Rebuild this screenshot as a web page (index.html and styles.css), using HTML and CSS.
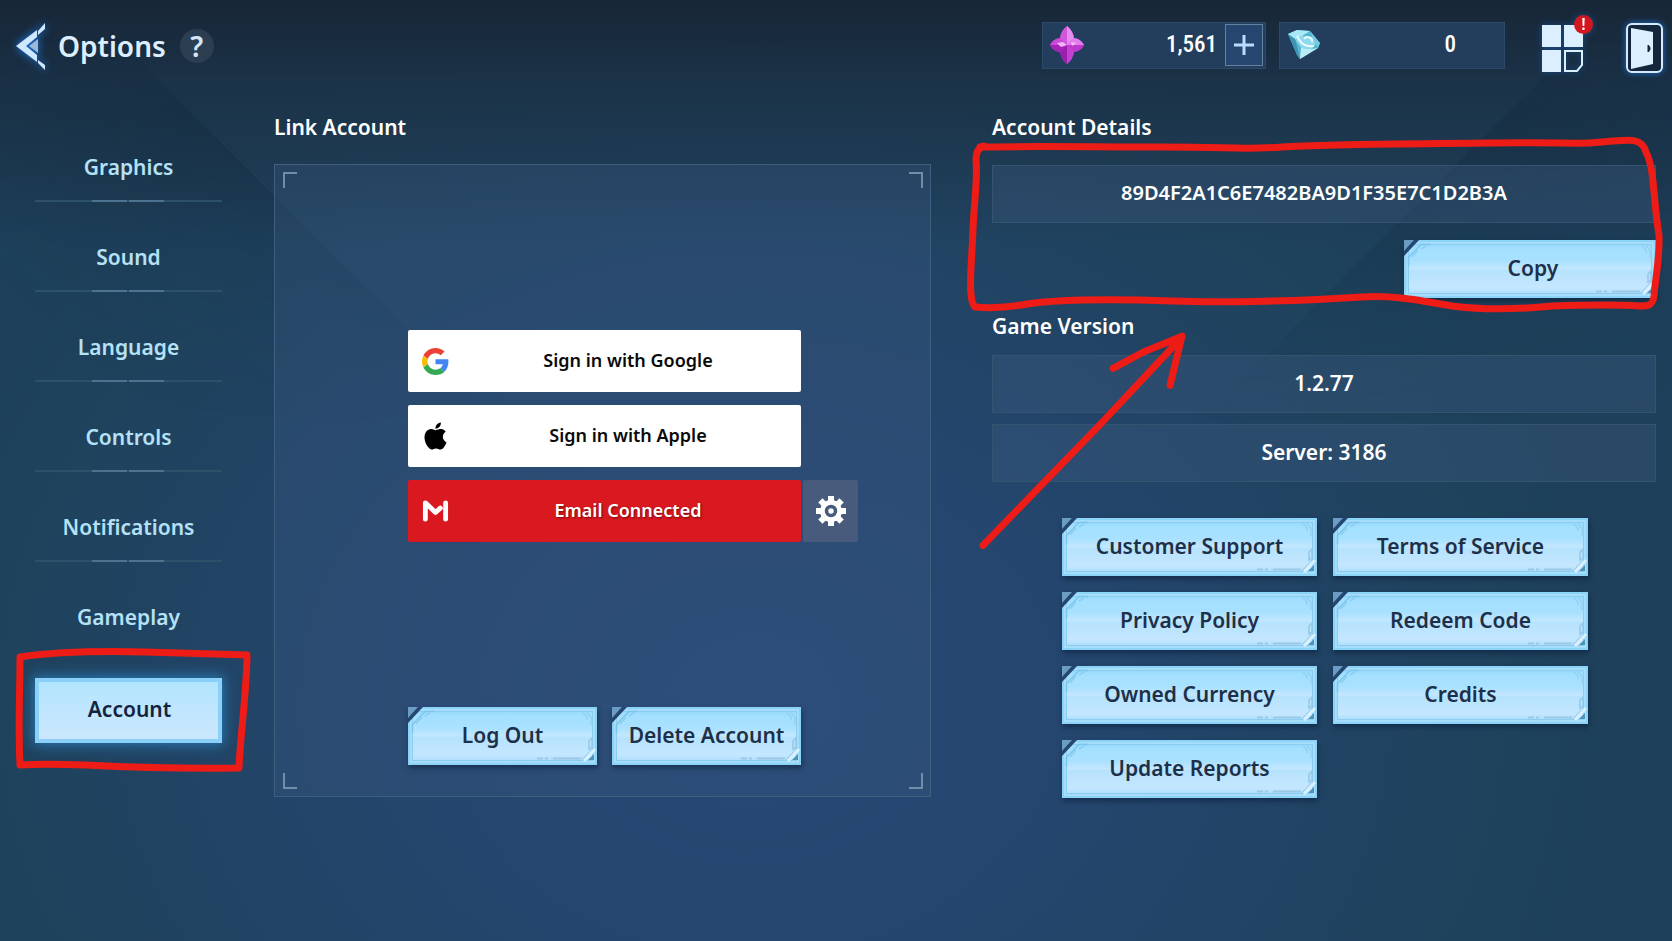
FILE: index.html
```
<!DOCTYPE html>
<html lang="en">
<head>
    <meta charset="UTF-8">
    <meta name="viewport" content="width=device-width, initial-scale=1">
    <title>Options</title>
    <link rel="stylesheet" href="styles.css">
</head>
<body>
<!-- shared button ornaments -->
<svg class="defs" aria-hidden="true">
    <symbol id="deco-tl" viewBox="0 0 26 26">
        <path d="M0 0H15L0 16Z" fill="#24466f"/>
        <path d="M0 0H10L0 11Z" fill="#6a9cc4"/>
        <path d="M26 4.5H17L4.500 17.500V26" fill="none" stroke="#7cc6ee" stroke-width="1.500"/>
        <path d="M22 6L17 9M14 10L8 17" fill="none" stroke="#8ecdf0" stroke-width="1.500"/>
    </symbol>
    <symbol id="deco-tr" viewBox="0 0 12 16">
        <path d="M2 1L6 5V8M6 1L10 5V13" fill="none" stroke="#8fd0f2" stroke-width="1.300"/>
    </symbol>
    <symbol id="deco-br" viewBox="0 0 62 30">
        <path d="M2 24.500H8M10 24.500H13M18 24.500H46" stroke="#9cc8e6" stroke-width="2"/>
        <path d="M60 15L49 27" fill="none" stroke="#d9f1ff" stroke-width="3"/>
        <path d="M54 15V7L57 4V13Z" fill="none" stroke="#93c8e8" stroke-width="1.500"/>
        <path d="M59 20V26H53Z" fill="#4f93bd"/>
        <path d="M58 14L47 26" stroke="#8cc4e6" stroke-width="1"/>
    </symbol>
</svg>

<header class="topbar">
    <button class="back" aria-label="Back">
        <svg viewBox="0 0 30 48" width="30" height="48">
            <path d="M29 1V7L22 13L22 9ZM21 8V15L10 24L21 33L21 40L0 24ZM22 38L29 43V48L22 41Z" fill="#cfe8ff"/>
            <path d="M22 17V31L13 24Z" fill="#9db8d6"/>
        </svg>
    </button>
    <h1>Options</h1>
    <button class="help" aria-label="Help">?</button>

    <div class="wallet">
        <div class="coin">
            <svg viewBox="0 0 34 38" width="34" height="38">
                <path d="M17 0Q23 5 24 12Q31 13 34 19Q31 25 24 26Q23 33 17 38Q11 33 10 26Q3 25 0 19Q3 13 10 12Q11 5 17 0Z" fill="#c93fd8"/>
                <path d="M17 0Q23 5 24 12L17 19Z" fill="#e68cee"/>
                <path d="M17 0Q11 5 10 12L17 19Z" fill="#cf58dc"/>
                <path d="M34 19Q31 13 24 12L17 19Z" fill="#e27cec"/>
                <path d="M34 19Q31 25 24 26L17 19Z" fill="#bd3acb"/>
                <path d="M0 19Q3 13 10 12L17 19Z" fill="#c94ad6"/>
                <path d="M0 19Q3 25 10 26L17 19Z" fill="#a822b8"/>
                <path d="M17 38Q23 33 24 26L17 19Z" fill="#c540d4"/>
                <path d="M17 38Q11 33 10 26L17 19Z" fill="#9a20ac"/>
                <path d="M7 17L13 16L17 19L11 21ZM21 16L27 17L22 20Z" fill="#f4b4f8"/>
            </svg>
            <span class="amount">1,561</span>
            <button class="plus" aria-label="Add">
                <svg viewBox="0 0 20 20" width="20" height="20"><path d="M10 0V20M0 10H20" stroke="#b9dcff" stroke-width="3"/></svg>
            </button>
        </div>
        <div class="coin coin-blue">
            <svg viewBox="0 0 34 30" width="34" height="30">
                <path d="M1 4L10 0L23 1L33 13L31 18L13 29L10 25Z" fill="#55b4cf"/>
                <path d="M1 4L10 0L23 1L15 6L8 9Z" fill="#a9e9f5"/>
                <path d="M1 4L8 9L13 29L10 25Z" fill="#3d93b3"/>
                <path d="M8 9L15 6L25 7L30 13L24 19L14 18Z" fill="#8ed9ee"/>
                <path d="M14 18L24 19L31 18L13 29Z" fill="#b9ecf7"/>
                <path d="M10 6C14 14 18 17 27 16M17 9C20 5 26 8 25 12" fill="none" stroke="#e9fbff" stroke-width="2"/>
                <path d="M23 1L33 13L31 18L27 11Z" fill="#74cbe2"/>
            </svg>
            <span class="amount">0</span>
        </div>
    </div>

    <button class="menu" aria-label="Menu">
        <svg viewBox="0 0 42 47" width="42" height="47">
            <path d="M0 0H19V22H0ZM22 0H41V22H22ZM0 25H19V47H0Z" fill="#dcefff"/>
            <path d="M23 26H40V40L35 46H23Z" fill="none" stroke="#dcefff" stroke-width="2"/>
        </svg>
        <span class="badge">!</span>
    </button>
    <button class="exit" aria-label="Exit">
        <svg viewBox="0 0 38 50" width="38" height="50">
            <rect x="1" y="1" width="35" height="48" rx="5" fill="#13263b" stroke="#d5eaff" stroke-width="2"/>
            <path d="M5 5L27 9V41L5 46Z" fill="#dcefff"/>
            <path d="M22 22A4 4 0 0 1 22 29Z" fill="#13263b" stroke="#13263b"/>
        </svg>
    </button>
</header>

<main class="options">
    <nav class="tabs">
        <button class="tab">Graphics</button>
        <button class="tab">Sound</button>
        <button class="tab">Language</button>
        <button class="tab">Controls</button>
        <button class="tab">Notifications</button>
        <button class="tab tab-last">Gameplay</button>
        <div class="tab-current">
            <button class="tab-active" aria-current="page">Account</button>
            <svg class="marker" viewBox="0 0 187 65" preserveAspectRatio="none">
                <path d="M-15 -21C20 -26 70 -27 110 -26S180 -24 212 -23C212 11 205 60 204 90C150 91 90 89 50 87C20 86 0 86 -15 87C-17 50 -15 10 -15 -21Z"/>
            </svg>
        </div>
    </nav>

    <section class="link-account">
        <h2>Link Account</h2>
        <div class="panel">
            <i class="corner tl"></i><i class="corner tr"></i><i class="corner bl"></i><i class="corner br"></i>
            <button class="signin">
                <svg viewBox="0 0 48 48" width="27" height="27">
                    <path fill="#EA4335" d="M24 9.500c3.540 0 6.710 1.220 9.210 3.600l6.850-6.850C35.900 2.380 30.470 0 24 0 14.620 0 6.510 5.380 2.560 13.220l7.980 6.190C12.430 13.720 17.740 9.500 24 9.500z"/>
                    <path fill="#4285F4" d="M46.980 24.550c0-1.570-.15-3.090-.38-4.550H24v9.020h12.940c-.58 2.960-2.260 5.480-4.780 7.180l7.730 6c4.510-4.180 7.090-10.360 7.090-17.650z"/>
                    <path fill="#FBBC05" d="M10.530 28.590c-.48-1.450-.76-2.990-.76-4.590s.27-3.140.76-4.590l-7.980-6.190C.92 16.460 0 20.120 0 24c0 3.880.92 7.540 2.560 10.780l7.970-6.190z"/>
                    <path fill="#34A853" d="M24 48c6.480 0 11.930-2.130 15.890-5.810l-7.730-6c-2.150 1.450-4.920 2.300-8.160 2.300-6.260 0-11.570-4.220-13.470-9.910l-7.980 6.190C6.510 42.620 14.620 48 24 48z"/>
                </svg>
                <span>Sign in with Google</span>
            </button>
            <button class="signin">
                <svg viewBox="0 0 24 24" width="27" height="28">
                    <path d="M12.152 6.896c-.948 0-2.415-1.078-3.960-1.040-2.040.027-3.910 1.183-4.961 3.014-2.117 3.675-.546 9.103 1.519 12.090 1.013 1.454 2.208 3.090 3.792 3.039 1.520-.065 2.090-.987 3.935-.987 1.831 0 2.350.987 3.960.948 1.637-.026 2.676-1.480 3.676-2.948 1.156-1.688 1.636-3.325 1.662-3.415-.039-.013-3.182-1.221-3.220-4.857-.026-3.040 2.480-4.494 2.597-4.559-1.429-2.090-3.623-2.324-4.390-2.376-2-.156-3.675 1.090-4.610 1.090zM15.530 3.830c.843-1.012 1.400-2.427 1.245-3.830-1.207.052-2.662.805-3.532 1.818-.780.896-1.454 2.338-1.273 3.714 1.338.104 2.715-.688 3.559-1.701"/>
                </svg>
                <span>Sign in with Apple</span>
            </button>
            <button class="signin email">
                <svg viewBox="0 0 28 24" width="27" height="24">
                    <path d="M3.500 20.500V3.500L14 13.500L19 9" fill="none" stroke="#fff" stroke-width="5" stroke-linejoin="round" stroke-linecap="round"/>
                    <path d="M24.500 20.500V3.500" stroke="#fff" stroke-width="5" stroke-linecap="round"/>
                </svg>
                <span>Email Connected</span>
            </button>
            <button class="gear" aria-label="Email settings">
                <svg viewBox="-16 -16 32 32" width="32" height="32">
                    <g fill="#fff">
                        <circle r="11"/>
                        <rect x="-3" y="-15" width="6" height="30"/>
                        <rect x="-3" y="-15" width="6" height="30" transform="rotate(45)"/>
                        <rect x="-3" y="-15" width="6" height="30" transform="rotate(90)"/>
                        <rect x="-3" y="-15" width="6" height="30" transform="rotate(135)"/>
                    </g>
                    <circle r="4.500" fill="#fff" stroke="#485b7c" stroke-width="3.500"/>
                </svg>
            </button>
            <div class="session">
                <button class="btn">Log Out<svg class="deco-tl"><use href="#deco-tl"/></svg><svg class="deco-tr"><use href="#deco-tr"/></svg><svg class="deco-br"><use href="#deco-br"/></svg></button>
                <button class="btn">Delete Account<svg class="deco-tl"><use href="#deco-tl"/></svg><svg class="deco-tr"><use href="#deco-tr"/></svg><svg class="deco-br"><use href="#deco-br"/></svg></button>
            </div>
        </div>
    </section>

    <section class="info">
        <div class="details">
            <h2>Account Details</h2>
            <p class="field field-id">89D4F2A1C6E7482BA9D1F35E7C1D2B3A</p>
            <button class="btn copy">Copy<svg class="deco-tl"><use href="#deco-tl"/></svg><svg class="deco-tr"><use href="#deco-tr"/></svg><svg class="deco-br"><use href="#deco-br"/></svg></button>
            <svg class="marker" viewBox="0 0 664 188" preserveAspectRatio="none">
                <path d="M-12 37C40 36 100 37 170 37S250 40 290 37S400 34 500 33S580 35 610 32S650 28 654 42C663 60 661 90 667 125C668 150 663 170 662 186C661 196 655 196 648 196C620 194 590 195 560 196C530 199 490 200 460 196C425 190 400 185 370 187C310 191 230 193 180 191C120 189 70 189 35 194C10 199 -5 198 -17 197C-25 190 -20 150 -19 120C-18 90 -14 70 -16 50Q-16 38 -8 36"/>
            </svg>
        </div>
        <div class="version">
            <h2>Game Version</h2>
            <p class="field">1.2.77</p>
            <p class="field">Server: 3186</p>
            <svg class="marker" viewBox="0 0 664 172" preserveAspectRatio="none">
                <path d="M-9 235L108 115L190 28M121 59L151 43L190 27L178 76"/>
            </svg>
        </div>
        <div class="links">
            <button class="btn">Customer Support<svg class="deco-tl"><use href="#deco-tl"/></svg><svg class="deco-tr"><use href="#deco-tr"/></svg><svg class="deco-br"><use href="#deco-br"/></svg></button>
            <button class="btn">Terms of Service<svg class="deco-tl"><use href="#deco-tl"/></svg><svg class="deco-tr"><use href="#deco-tr"/></svg><svg class="deco-br"><use href="#deco-br"/></svg></button>
            <button class="btn">Privacy Policy<svg class="deco-tl"><use href="#deco-tl"/></svg><svg class="deco-tr"><use href="#deco-tr"/></svg><svg class="deco-br"><use href="#deco-br"/></svg></button>
            <button class="btn">Redeem Code<svg class="deco-tl"><use href="#deco-tl"/></svg><svg class="deco-tr"><use href="#deco-tr"/></svg><svg class="deco-br"><use href="#deco-br"/></svg></button>
            <button class="btn">Owned Currency<svg class="deco-tl"><use href="#deco-tl"/></svg><svg class="deco-tr"><use href="#deco-tr"/></svg><svg class="deco-br"><use href="#deco-br"/></svg></button>
            <button class="btn">Credits<svg class="deco-tl"><use href="#deco-tl"/></svg><svg class="deco-tr"><use href="#deco-tr"/></svg><svg class="deco-br"><use href="#deco-br"/></svg></button>
            <button class="btn">Update Reports<svg class="deco-tl"><use href="#deco-tl"/></svg><svg class="deco-tr"><use href="#deco-tr"/></svg><svg class="deco-br"><use href="#deco-br"/></svg></button>
        </div>
    </section>
</main>
</body>
</html>
```
FILE: styles.css
```
*{
    margin: 0;
    padding: 0;
    box-sizing: border-box;
}
body{
    min-height: 100vh;
    font-family: "Noto Sans", "Open Sans", sans-serif;
    font-weight: 600;
    color: #fff;
    background:
        linear-gradient(to bottom, #172636 0, rgba(26,46,66,.75) 9%, rgba(32,62,82,0) 26%),
        radial-gradient(ellipse 52% 75% at 45% 75%, #264873 0, #25466f 35%, #1f425d 85%, #1e405a 100%);
}
/* diagonal light bands, fading out downwards */
body::before{
    content: "";
    position: absolute;
    inset: 0;
    z-index: -1;
    background:
        linear-gradient(45deg, rgba(10,30,50,0) 25%, rgba(10,30,50,.18) 39%, rgba(10,30,50,0) 39%),
        linear-gradient(135deg, rgba(10,30,50,0) 62%, rgba(10,30,50,.18) 62%, rgba(10,30,50,0) 80%);
    mask-image: linear-gradient(transparent 4%, #000 12%, #000 18%, transparent 45%);
}
button{
    font: inherit;
    color: inherit;
    border: 0;
    background: none;
    cursor: pointer;
}
svg{
    display: block;
}
.defs{
    display: none;
}

/* top bar */
.topbar{
    display: flex;
    align-items: center;
    height: 92px;
    padding: 0 8px 0 16px;
}
.back{
    filter: drop-shadow(0 0 4px #1c7df0);
}
h1{
    margin-left: 12px;
    font-size: 28px;
    line-height: 40px;
    font-weight: 600;
    color: #dceeff;
}
.help{
    width: 34px;
    height: 34px;
    margin-left: 14px;
    border-radius: 50%;
    background: #2c3f52;
    font-size: 28px;
    line-height: 34px;
    color: #d5e6f8;
}
.wallet{
    display: flex;
    gap: 13px;
    margin: 0 0 2px auto;
}
.coin{
    display: flex;
    align-items: center;
    width: 224px;
    height: 47px;
    padding: 0 2px 0 7px;
    border: 1px solid #2c4967;
    background: #233e5c;
}
.coin-blue{
    width: 226px;
    padding-right: 48px;
}
.amount{
    margin-left: auto;
    font-family: "Liberation Sans Narrow", "Roboto Condensed", Roboto, sans-serif;
    font-weight: 500;
    font-size: 23px;
    line-height: 40px;
}
.plus{
    display: grid;
    place-items: center;
    width: 38px;
    height: 42px;
    margin-left: 8px;
    border: 1px solid #64829f;
    background: #27466f;
}
.menu{
    position: relative;
    margin: 4px 0 0 37px;
    filter: drop-shadow(0 0 3px #174c88);
}
.badge{
    position: absolute;
    top: -10px;
    right: -9px;
    width: 19px;
    height: 19px;
    border-radius: 50%;
    background: #d3171f;
    font-size: 16px;
    line-height: 19px;
}
.exit{
    margin: 4px 0 0 42px;
    filter: drop-shadow(0 0 3px #1c6fd0);
}

/* page columns */
.options{
    display: grid;
    grid-template-columns: 187px minmax(0, 770fr) minmax(0, 664fr);
    padding: 18px 16px 40px 35px;
}
.link-account{
    margin: 0 61px 0 52px;
}
h2{
    margin-bottom: 20px;
    font-size: 21px;
    line-height: 34px;
    font-weight: 600;
}

/* left tabs */
.tabs{
    display: flex;
    flex-direction: column;
    padding-top: 2px;
}
.tab{
    height: 90px;
    padding-top: 20px;
    font-size: 21px;
    color: #b5e1f6;
    background:
        linear-gradient(to right, transparent 57px, #4e7391 57px, #4e7391 92px, transparent 92px, transparent 94px, #4e7391 94px, #4e7391 129px, transparent 129px) bottom / 100% 2px no-repeat,
        linear-gradient(#2d5168, #2d5168) bottom / 100% 2px no-repeat;
}
.tab-last{
    background: none;
}
.tab-current{
    position: relative;
    margin-top: 26px;
}
.tab-active{
    width: 100%;
    height: 65px;
    padding: 0 0 4px 2px;
    border: 4px solid #8bd0f8;
    background: linear-gradient(#b3e5ff, #cbe7fd);
    box-shadow: 0 0 12px 2px #2877b0;
    font-size: 21px;
    color: #14243e;
}
.marker{
    position: absolute;
    inset: 0;
    width: 100%;
    height: 100%;
    overflow: visible;
    pointer-events: none;
}
.marker path{
    fill: none;
    stroke: #ed1c16;
    stroke-width: 7px;
    stroke-linecap: round;
    stroke-linejoin: round;
    vector-effect: non-scaling-stroke;
}

/* link account */
.panel{
    position: relative;
    display: grid;
    grid-template-columns: 133fr 393fr 129fr;
    row-gap: 13px;
    padding: 165px 0 31px;
    border: 1px solid #3f5f7e;
    background: rgba(66,92,138,.28);
}
.corner{
    position: absolute;
    width: 14px;
    height: 16px;
    border: 0 solid #6f8fa9;
}
.tl{ top: 7px; left: 8px; border-width: 2px 0 0 2px; }
.tr{ top: 7px; right: 7px; border-width: 2px 2px 0 0; }
.bl{ bottom: 7px; left: 8px; border-width: 0 0 2px 2px; }
.br{ bottom: 7px; right: 7px; border-width: 0 2px 2px 0; }
.signin{
    grid-column: 2;
    display: flex;
    align-items: center;
    height: 62px;
    padding: 0 14px;
    border-radius: 2px;
    background: #fff;
    font-size: 18px;
    color: #0a0a0a;
}
.signin span{
    flex: 1;
    padding: 0 0 2px 20px;
}
.email{
    background: #d91820;
    color: #fff;
    text-shadow: 1px 1px 2px rgba(80,0,0,.7);
}
.gear{
    grid-column: 3;
    grid-row: 3;
    display: grid;
    place-items: center;
    width: 55px;
    height: 62px;
    margin-left: 2px;
    border-radius: 2px;
    background: #485b7c;
}
.session{
    grid-column: 2;
    display: grid;
    grid-template-columns: 1fr 1fr;
    gap: 15px;
    margin-top: 152px;
}

/* light blue buttons */
.btn{
    position: relative;
    height: 58px;
    padding-bottom: 3px;
    border: 2px solid #8bd3f7;
    background: linear-gradient(#8fd4f8 0, #a3e0ff 12%, #a9e1ff 35%, #c3e7ff 50%, #b6e2fd 53%, #c4e7ff 85%, #a5dcfb 100%);
    box-shadow: inset 0 0 0 2px #a5ddfa, inset 0 0 0 3px #8bcdf0, 1px 3px 5px rgba(10,30,60,.6);
    font-size: 21px;
    white-space: nowrap;
    color: #1d3049;
}
.deco-tl{
    position: absolute;
    top: -2px;
    left: -2px;
    width: 26px;
    height: 26px;
}
.deco-tr{
    position: absolute;
    top: 3px;
    right: 2px;
    width: 12px;
    height: 16px;
}
.deco-br{
    position: absolute;
    right: -2px;
    bottom: -1px;
    width: 62px;
    height: 30px;
}

/* right column */
.details, .version{
    position: relative;
}
.details{
    display: flex;
    flex-direction: column;
}
.details h2{
    margin-bottom: 21px;
}
.field{
    height: 58px;
    border: 1px solid #345470;
    background: rgba(62,92,130,.35);
    font-size: 21px;
    line-height: 54px;
    text-align: center;
}
.field-id{
    padding-right: 20px;
    font-size: 20px;
}
.copy{
    align-self: flex-end;
    width: 38%;
    margin-top: 17px;
    padding-left: 6px;
}
.version{
    margin-top: 11px;
}
.version h2{
    margin-bottom: 12px;
}
.version .field + .field{
    margin-top: 11px;
}
.links{
    display: grid;
    grid-template-columns: 1fr 1fr;
    gap: 16px;
    margin-top: 36px;
    padding: 0 68px 0 70px;
}
```
